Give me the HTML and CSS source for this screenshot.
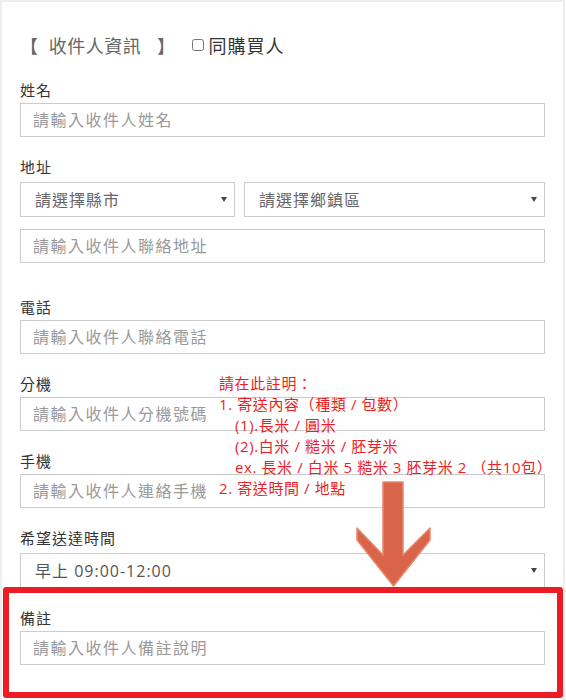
FILE: index.html
```html
<!DOCTYPE html>
<html lang="zh-Hant">
<head>
  <meta charset="UTF-8">
  <meta name="viewport" content="width=device-width, initial-scale=1.0">
  <title>收件人資訊</title>
  <link rel="stylesheet" href="styles.css">
</head>
<body>
  <div class="panel">
    <div class="panel-title">
      <span class="title-text">【&nbsp;&nbsp;收件人資訊&nbsp;&nbsp;&nbsp;】</span>
      <label class="same-buyer"><input type="checkbox">同購買人</label>
    </div>

    <div class="field">
      <label class="field-label">姓名</label>
      <input class="text-input" type="text" placeholder="請輸入收件人姓名">
    </div>

    <div class="field field-address">
      <label class="field-label">地址</label>
      <div class="select-row">
        <div class="select-wrap">
          <select class="select-input"><option>請選擇縣市</option></select>
        </div>
        <div class="select-wrap">
          <select class="select-input"><option>請選擇鄉鎮區</option></select>
        </div>
      </div>
      <input class="text-input" type="text" placeholder="請輸入收件人聯絡地址">
    </div>

    <div class="field">
      <label class="field-label">電話</label>
      <input class="text-input" type="text" placeholder="請輸入收件人聯絡電話">
    </div>

    <div class="field">
      <label class="field-label">分機</label>
      <input class="text-input" type="text" placeholder="請輸入收件人分機號碼">
    </div>

    <div class="field">
      <label class="field-label">手機</label>
      <input class="text-input" type="text" placeholder="請輸入收件人連絡手機">
    </div>

    <div class="field field-time">
      <label class="field-label">希望送達時間</label>
      <div class="select-wrap select-time">
        <select class="select-input select-dark"><option>早上 09:00-12:00</option></select>
      </div>
    </div>

    <div class="highlight">
      <div class="field">
        <label class="field-label">備註</label>
        <input class="text-input" type="text" placeholder="請輸入收件人備註說明">
      </div>
    </div>

    <!-- 說明文字 -->
    <div class="note">
      <div>請在此註明：</div>
      <div>1. 寄送內容（種類 / 包數）</div>
      <div class="note-sub">(1).長米 / 圓米</div>
      <div class="note-sub">(2).白米 / 糙米 / 胚芽米</div>
      <div class="note-sub">ex. 長米 / 白米 5 糙米 3 胚芽米 2 （共10包）</div>
      <div>2. 寄送時間 / 地點</div>
    </div>

    <svg class="note-arrow" width="78" height="112" viewBox="0 0 78 112">
      <polygon points="28,3 48,3 48,76 75,49 75,61 38.5,107 2,61 2,49 28,76"
               fill="#d9644a" stroke="#e8876b" stroke-width="1.5" stroke-linejoin="round"/>
    </svg>
  </div>
</body>
</html>
```

FILE: styles.css
```css
body {
  margin: 0;
  padding: 0;
  background-color: white;
  font-family: "Open Sans", "Noto Sans CJK TC", sans-serif;
  letter-spacing: 1px;
  color: #222;
}

.panel {
  position: relative;
  box-sizing: border-box;
  width: 565px;
  border: 2px solid #eee;
  padding: 28px 18px 40px 18px;
}

.panel-title {
  display: flex;
  align-items: center;
  height: 30px;
  margin-bottom: 20px;
}

.title-text {
  font-size: 18px;
  letter-spacing: 0.5px;
  color: #666;
  white-space: pre;
}

.same-buyer {
  display: flex;
  align-items: center;
  margin-left: 17px;
  font-size: 18px;
  color: #333;
}

.same-buyer input {
  width: 12px;
  height: 12px;
  margin: 0 4px 0 0;
}

.field {
  margin-bottom: 20px;
}

.field-label {
  display: block;
  font-size: 15px;
  line-height: 20px;
  margin-bottom: 3px;
  color: #333;
}

.field-address {
  margin-bottom: 34px;
}

.field-time {
  margin-bottom: 0;
}

.text-input {
  display: block;
  box-sizing: border-box;
  width: 100%;
  height: 34px;
  margin: 0;
  padding: 0 12px;
  border: 1px solid #ccc;
  border-radius: 0;
  font-family: inherit;
  font-size: 16px;
  letter-spacing: 1.5px;
  color: #555;
  outline: none;
}

.text-input::placeholder {
  color: #999;
}

.select-row {
  display: grid;
  grid-template-columns: 215px 1fr;
  gap: 9px;
  margin-top: 5px;
  margin-bottom: 12px;
}

.select-time {
  margin-top: 5px;
}

.select-wrap {
  position: relative;
}

.select-wrap::after {
  content: "";
  position: absolute;
  right: 8px;
  top: 15px;
  border-left: 3px solid transparent;
  border-right: 3px solid transparent;
  border-top: 5px solid #444;
}

.select-input {
  display: block;
  box-sizing: border-box;
  width: 100%;
  height: 35px;
  margin: 0;
  padding: 0 14px;
  border: 1px solid #ccc;
  border-radius: 0;
  background: white;
  appearance: none;
  font-family: inherit;
  font-size: 16px;
  letter-spacing: 1px;
  color: #666;
}

.select-dark {
  color: #555;
}

.highlight {
  margin: -1px -18px 0 -17px;
  padding: 15px 12px 27px 11px;
  border: 6px solid #ed1c24;
  border-radius: 3px;
  position: relative;
}

.highlight .field {
  margin-bottom: 0;
}

.note {
  position: absolute;
  left: 217px;
  top: 371px;
  font-size: 15px;
  line-height: 21px;
  color: #ee1d25;
  letter-spacing: 0.6px;
  white-space: nowrap;
}

.note-sub {
  padding-left: 16px;
}

.note-arrow {
  position: absolute;
  left: 353px;
  top: 477px;
}
```
